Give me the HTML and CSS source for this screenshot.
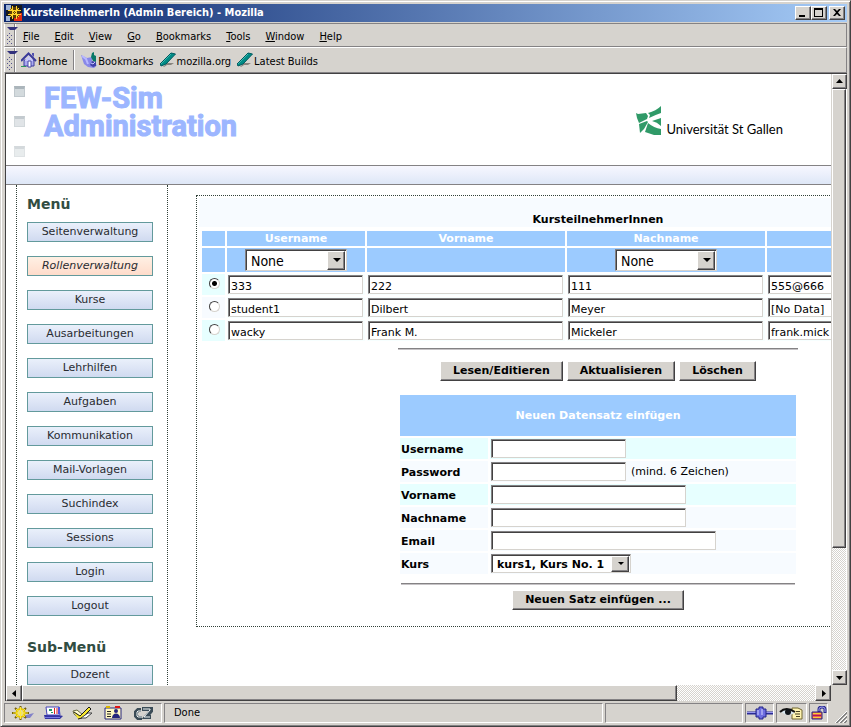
FILE: index.html
```html
<!DOCTYPE html>
<html lang="de">
<head>
<meta charset="utf-8">
<title>KursteilnehmerIn (Admin Bereich) - Mozilla</title>
<link rel="stylesheet" href="styles.css">
</head>
<body>
<div class="window">
  <header class="titlebar">
    <svg class="app-icon" viewBox="0 0 16 16"><rect width="16" height="16" fill="#18191c"/><path d="M0 0h5v5H0zM0 11h4v5H0z" fill="#9fb4d8"/><path d="M10 8h6v8H8v-3h2z" fill="#e02a12"/><path d="M4 5l2-3h5l3 3v4l-3 4H6L3 9z" fill="#5a3c08"/><path d="M6.500 1v13M10.500 1v13M2 5.500h13M2 9.500h13M4 3l9 9M13 3l-9 9" fill="none" stroke="#ffd42a"/></svg>
    <h1>KursteilnehmerIn (Admin Bereich) - Mozilla</h1>
    <div class="win-buttons">
      <button aria-label="Minimieren"><svg viewBox="0 0 12 10"><path d="M2 7h6v2H2z"/></svg></button>
      <button aria-label="Maximieren"><svg viewBox="0 0 12 10"><path fill-rule="evenodd" d="M1 0h9v9H1zM2 2h7v6H2z"/></svg></button>
      <button class="close" aria-label="Schließen"><svg viewBox="0 0 12 10"><path d="M2 1h2l2 2 2-2h2L7 4.500l3 3.500H8L6 6 4 8H2l3-3.500z"/></svg></button>
    </div>
  </header>

  <div class="toolbar menu-row">
    <span class="gripper"></span>
    <nav class="menus">
      <button><u>F</u>ile</button><button><u>E</u>dit</button><button><u>V</u>iew</button><button><u>G</u>o</button><button><u>B</u>ookmarks</button><button><u>T</u>ools</button><button><u>W</u>indow</button><button><u>H</u>elp</button>
    </nav>
  </div>
  <div class="toolbar links-row">
    <span class="gripper"></span>
    <nav class="links">
      <a href="#"><svg viewBox="0 0 16 16"><path d="M3 8h10v6H3z" fill="#a9a9f0" stroke="#3c3c9c"/><path d="M0 9L7.500 1.500 15 9" fill="none" stroke="#3a3a9a" stroke-width="2"/><path d="M4 8l4-4 4 4v1H4z" fill="#c9c9fa"/><path d="M7 9h3v6H7z" fill="#fff" stroke="#4848a8"/><path d="M11 1h2v4l-2-2z" fill="#5050b0"/><path d="M0 14.500h5" stroke="#2a9a5a"/></svg><span>Home</span></a>
      <span class="divider"></span>
      <a href="#"><svg viewBox="0 0 16 16"><path d="M0 3l6 3 5-1v6l5 2-3 3-6-1-4-3z" fill="#8888e8"/><path d="M1 4l4 3 2 5" fill="none" stroke="#b8b8ff" stroke-width="2"/><path d="M11 1l2-1v3l2 1v6l-3-1-2-4z" fill="#087868"/><path d="M11 9l4 1v4l-3 1-3-2z" fill="#4040a8"/><path d="M10 11l2 1 2-2" fill="none" stroke="#ccccff"/></svg><span>Bookmarks</span></a>
      <a href="#"><svg viewBox="0 0 16 16"><path d="M3 15l4-4h7l-3 2-4 0-3 2z" fill="#87837d"/><path d="M0 12L11 1l4.500 1L6 12l-5 2z" fill="#008b85" stroke="#005a5f"/><path d="M1 12L11 2" stroke="#40b8b0"/></svg><span>mozilla.org</span></a>
      <a href="#"><svg viewBox="0 0 16 16"><path d="M3 15l4-4h7l-3 2-4 0-3 2z" fill="#87837d"/><path d="M0 12L11 1l4.500 1L6 12l-5 2z" fill="#008b85" stroke="#005a5f"/><path d="M1 12L11 2" stroke="#40b8b0"/></svg><span>Latest Builds</span></a>
    </nav>
  </div>

  <div class="viewport">
    <div class="page">
      <header class="banner">
        <div class="marks"><i></i><i></i><i></i></div>
        <h2>FEW-Sim<br>Administration</h2>
        <div class="uni">
          <svg viewBox="0 0 26 29"><path d="M0 7l2 1 8-1 2 3-1 3-8 4-2-5zM12 7Q20 5 25 0v7Q19 9 13 12l1-3zM16 15l9-3v8q-4-4-9-5zM3 18l8-3 1 1-4 7-4 4zM12 17q6 5 13 6v6h-7L9 26z" fill="#309a68"/></svg>
          <span>Universität St Gallen</span>
        </div>
      </header>
      <div class="band"></div>
      <div class="columns">
        <nav class="sidebar">
          <h3>Menü</h3>
          <a href="#">Seitenverwaltung</a>
          <a href="#" class="active">Rollenverwaltung</a>
          <a href="#">Kurse</a>
          <a href="#">Ausarbeitungen</a>
          <a href="#">Lehrhilfen</a>
          <a href="#">Aufgaben</a>
          <a href="#">Kommunikation</a>
          <a href="#">Mail-Vorlagen</a>
          <a href="#">Suchindex</a>
          <a href="#">Sessions</a>
          <a href="#">Login</a>
          <a href="#">Logout</a>
          <h3>Sub-Menü</h3>
          <a href="#">Dozent</a>
        </nav>
        <main class="panel">
          <h4>KursteilnehmerInnen</h4>
          <table class="people">
            <colgroup><col class="c-pick"><col class="c-user"><col class="c-name"><col class="c-name"><col></colgroup>
            <thead>
              <tr><th></th><th>Username</th><th>Vorname</th><th>Nachname</th><th></th></tr>
              <tr class="filters"><td></td><td><span class="drop wide"><select aria-label="Filter Username"><option>None</option></select></span></td><td></td><td><span class="drop wide"><select aria-label="Filter Nachname"><option>None</option></select></span></td><td></td></tr>
            </thead>
            <tbody>
              <tr><td><input type="radio" name="p" aria-label="333" checked></td><td><input class="w-s" aria-label="Username" value="333"></td><td><input class="w-m" aria-label="Vorname" value="222"></td><td><input class="w-m" aria-label="Nachname" value="111"></td><td><input class="w-l" aria-label="Email" value="555@666"></td></tr>
              <tr><td><input type="radio" name="p" aria-label="student1"></td><td><input class="w-s" aria-label="Username" value="student1"></td><td><input class="w-m" aria-label="Vorname" value="Dilbert"></td><td><input class="w-m" aria-label="Nachname" value="Meyer"></td><td><input class="w-l" aria-label="Email" value="[No Data]"></td></tr>
              <tr><td><input type="radio" name="p" aria-label="wacky"></td><td><input class="w-s" aria-label="Username" value="wacky"></td><td><input class="w-m" aria-label="Vorname" value="Frank M."></td><td><input class="w-m" aria-label="Nachname" value="Mickeler"></td><td><input class="w-l" aria-label="Email" value="frank.mick"></td></tr>
            </tbody>
          </table>
          <hr>
          <div class="actions"><button>Lesen/Editieren</button><button>Aktualisieren</button><button>Löschen</button></div>
          <form class="new-entry">
            <h5>Neuen Datensatz einfügen</h5>
            <div class="row cyan"><label for="f1">Username</label><div><input id="f1" class="w-s"></div></div>
            <div class="row"><label for="f2">Password</label><div><input id="f2" type="password" class="w-s"><span>(mind. 6 Zeichen)</span></div></div>
            <div class="row cyan"><label for="f3">Vorname</label><div><input id="f3" class="w-m"></div></div>
            <div class="row"><label for="f4">Nachname</label><div><input id="f4" class="w-m"></div></div>
            <div class="row"><label for="f5">Email</label><div><input id="f5" class="w-l"></div></div>
            <div class="row"><label for="f6">Kurs</label><div><span class="drop course"><select id="f6"><option>kurs1, Kurs No. 1</option></select></span></div></div>
            <hr>
            <button type="button">Neuen Satz einfügen ...</button>
          </form>
        </main>
      </div>
    </div>
    <div class="scroll vertical">
      <button aria-label="Nach oben"><svg viewBox="0 0 7 7"><path d="M0 5h7L3.500 1z"/></svg></button>
      <span class="thumb"></span><span class="track"></span>
      <button aria-label="Nach unten"><svg viewBox="0 0 7 7"><path d="M0 2h7L3.500 6z"/></svg></button>
    </div>
    <div class="scroll horizontal">
      <button aria-label="Nach links"><svg viewBox="0 0 7 7"><path d="M5 0v7L1 3.500z"/></svg></button>
      <span class="thumb"></span><span class="track"></span>
      <button aria-label="Nach rechts"><svg viewBox="0 0 7 7"><path d="M2 0v7L6 3.500z"/></svg></button>
    </div>
    <div class="corner"></div>
  </div>

  <footer class="status">
    <div class="cell apps">
      <svg viewBox="0 0 22 14"><path d="M11 10l7-2 4-1-4 5h-6z" fill="#8282c8"/><path d="M0 7h17M8.500 0v14M3 2l11 10M14 2L3 12" stroke="#77620a" stroke-width="2"/><circle cx="8.500" cy="7" r="4" fill="#d6d3ce" stroke="#e9c800" stroke-width="2"/><path d="M1 7h15M8.500 1v12M4 3l9 8M13 3l-9 8" stroke="#ffeb3a"/></svg>
      <svg viewBox="0 0 22 14"><path d="M2 9h15l4 1-3 3H3z" fill="#3535a0"/><path d="M4 1h13l1 8H5z" fill="#fff" stroke="#4545b8"/><path d="M7 3h3v2H7zM9 6h2v1H9z" fill="#229b62"/><path d="M12.500 2v6M15 2v6" stroke="#d82323"/><path d="M17 1v7" stroke="#5050e0" stroke-width="2"/><path d="M3 11.500h15" stroke="#7878e5"/></svg>
      <svg viewBox="0 0 22 14"><path d="M1 5l4-1 6 5-4 3-5-4z" fill="#fffbd0" stroke="#686840"/><path d="M2 6l6 4 9-9 2 2-9 9-4 1" fill="#f7e72c" stroke="#181818"/><path d="M9 12l7-5 4 0-6 5z" fill="#fff" stroke="#444"/></svg>
      <svg viewBox="0 0 22 14"><path d="M3 2h16v11H3z" fill="#fff8c2" stroke="#26267c"/><path d="M5 5.500h4M5 8h4M5 10.500h4" stroke="#222"/><circle cx="14" cy="5" r="2" fill="#26267c"/><path d="M10 12c0-6 8-6 8 0z" fill="#26267c"/><path d="M4 1h4" stroke="#d9b400" stroke-width="2"/><path d="M13 1h5" stroke="#e01515" stroke-width="2"/></svg>
      <svg viewBox="0 0 22 14"><path d="M9 4H6L4 6v4l2 2h4M10 3h9v2l-5 6h5" fill="none" stroke="#3b4c57" stroke-width="4"/><path d="M9 5H6L5 6v4l1 1h4M11 3h7v1l-6 7h6" fill="none" stroke="#f3f7f7"/></svg>
    </div>
    <div class="cell message">Done</div>
    <div class="cell progress"></div>
    <div class="cell online"><svg viewBox="0 0 26 14"><path d="M0 7h26" stroke="#2b2b96" stroke-width="3"/><path d="M0 6.500h26" stroke="#9797ed"/><path d="M9 3h3V1h4v2h3v8h-3v2h-4v-2H9z" fill="#6d6de0" stroke="#242488"/><path d="M11 4v5M15 3v6" stroke="#d4d4ff"/></svg></div>
    <div class="cell privacy"><svg viewBox="0 0 26 14"><path d="M13 2h6l4 2v9H13z" fill="#fff4b0" stroke="#71662e"/><path d="M17 5.500h4M16 8h5M17 10.500h4" stroke="#443e20"/><path d="M1 6Q8 1 16 7Q8 11 4 7z" fill="#d8e6ee"/><path d="M1 6Q7 0 16 6" fill="none" stroke="#111" stroke-width="2"/><circle cx="9" cy="6" r="3" fill="#10151a"/></svg></div>
    <div class="cell security"><svg viewBox="0 0 16 14"><path d="M1 6h10v7H1z" fill="#ef5b52" stroke="#26267c"/><path d="M2 7.500h8M2 11.500h8" stroke="#f6cf32"/><path d="M2 9.500h8" stroke="#a11b5b"/><path d="M8 6V3q0-2 3-2t3 2v4" fill="none" stroke="#27278e" stroke-width="3"/><path d="M8 5V3q0-2 3-2t3 2v3" fill="none" stroke="#a6a6f1"/></svg></div>
    <svg class="grip" viewBox="0 0 13 13"><path d="M1 13L13 1M5 13l8-8M9 13l4-4" stroke="#fff"/><path d="M2 13L13 2M3 13L13 3M6 13l7-7M7 13l6-6M10 13l3-3M11 13l2-2" stroke="#858585"/></svg>
  </footer>
</div>
</body>
</html>
```
FILE: styles.css
```css
:root {
  --face: #d6d3ce;
  --shade: #848284;
  --dark: #424142;
  --blue: #9ccbff;
  --cyan: #e7ffff;
  --pale: #f7fbff;
  --ui: "DejaVu Sans Condensed", "Noto Sans", sans-serif;
  --text: "DejaVu Sans", sans-serif;
}
* { box-sizing: border-box; }
body { margin: 0; font: 11px/14px var(--ui); color: #000; }
h1, h2, h3, h4, h5 { margin: 0; }
button, input, select { font: inherit; color: inherit; margin: 0; }
svg { display: block; flex: none; }

.window {
  height: 100vh;
  display: flex;
  flex-direction: column;
  overflow: hidden;
  background: var(--face);
  border: 1px solid var(--face);
  border-right-color: var(--dark);
  border-bottom-color: var(--dark);
  box-shadow: inset 1px 1px #fff, inset -1px -1px var(--shade);
  padding: 3px;
}

.titlebar {
  height: 18px;
  margin-bottom: 1px;
  display: flex;
  align-items: center;
  gap: 1px;
  padding: 0 2px;
  background: linear-gradient(90deg, #08246b, #a5cbf7);
  color: #fff;
}
.titlebar h1 { flex: 1; font-size: 11px; line-height: 18px; white-space: nowrap; }
.app-icon { width: 16px; height: 16px; }
.win-buttons { display: flex; }
.win-buttons button, .scroll button {
  padding: 0;
  background: var(--face);
  border: 1px solid;
  border-color: #fff var(--dark) var(--dark) #fff;
  box-shadow: inset -1px -1px var(--shade);
}
.win-buttons button { width: 16px; height: 14px; }
.win-buttons .close { margin-left: 2px; }
.win-buttons svg { width: 12px; height: 10px; margin-left: 1px; }

.toolbar {
  display: flex;
  border: 1px solid var(--shade);
  border-top-color: #fff;
  border-left-color: #fff;
}
.menu-row { height: 24px; border-top-color: var(--shade); }
.links-row { height: 26px; }
.gripper {
  width: 10px;
  padding: 3px 2px 2px;
  display: flex;
  flex-direction: column;
  gap: 3px;
  border-right: 1px solid var(--shade);
  box-shadow: 1px 0 #fff;
}
.gripper::before { content: ""; width: 5px; border: solid transparent; border-width: 3px 3px 0; border-top-color: #31307b; }
.gripper::after {
  content: "";
  flex: 1;
  width: 5px;
  background:
    conic-gradient(at 1px 1px, transparent 75%, #52518c 0) 0 2px / 4px 4px,
    conic-gradient(at 1px 1px, transparent 75%, #52518c 0) 2px 0 / 4px 4px;
}
.menus, .links { display: flex; align-items: center; padding-top: 3px; }
.menus { gap: 15px; padding-left: 8px; }
.menus button { border: 0; background: none; padding: 0; }
.links { gap: 6px; padding-left: 6px; padding-top: 0; }
.links a { display: flex; align-items: center; gap: 1px; color: #000; text-decoration: none; }
.links a span { padding-top: 3px; }
.links svg { width: 16px; height: 16px; }
.divider { height: 20px; border-left: 1px solid var(--shade); border-right: 1px solid #fff; }

.viewport {
  flex: 1;
  min-height: 0;
  display: grid;
  grid-template: minmax(0, 1fr) 16px / minmax(0, 1fr) 16px;
  border-top: 1px solid var(--dark);
  border-left: 1px solid var(--dark);
  margin-left: 1px;
}
.page { overflow: hidden; background: #fff; display: flex; flex-direction: column; font-family: var(--text); }

.banner { flex: none; height: 92px; display: flex; padding: 0 48px 0 8px; border-bottom: 1px solid var(--shade); }
.marks { width: 30px; padding-top: 12px; display: grid; grid-auto-rows: 30px; }
.marks i { width: 11px; height: 11px; background: #d3dadd; border: 1px solid #c0c8cd; border-top: 3px solid #abb5bb; }
.marks i:nth-child(2) { opacity: .7; }
.marks i:nth-child(3) { opacity: .5; }
.banner h2 { padding-top: 10px; font: bold 29px/28px Roboto, sans-serif; color: #9cb6ff; -webkit-text-stroke: 1px #9cb6ff; }
.uni { margin: 32px 0 0 auto; display: flex; align-items: flex-start; gap: 4px; }
.uni svg { width: 26px; height: 29px; }
.uni span { font: 13px/16px Lato, sans-serif; padding-top: 15px; }
.band { flex: none; height: 19px; background: linear-gradient(#f7f7ff, #dee7f7); border-bottom: 1px solid var(--shade); }

.columns { flex: 1; min-height: 0; display: flex; align-items: flex-start; gap: 28px; padding-left: 10px; }
.sidebar {
  flex: none;
  width: 152px;
  padding: 11px 14px 20px 10px;
  display: flex;
  flex-direction: column;
  gap: 14px;
  border: dotted #314139;
  border-width: 0 1px;
}
.sidebar h3 { font-size: 14px; line-height: 16px; color: #314d42; margin-bottom: -4px; }
.sidebar a + h3 { margin-top: 9px; }
.sidebar a {
  height: 20px;
  border: 1px solid #639a9c;
  background: linear-gradient(#eaf0fb, #d0daf0);
  color: #292c31;
  font-size: 11px;
  line-height: 18px;
  text-align: center;
  text-decoration: none;
}
.sidebar .active { background: linear-gradient(#fff0e4, #ffdccb); font-style: italic; }

.panel {
  flex: none;
  width: 804px;
  margin-top: 10px;
  padding: 2px 2px 16px;
  border: 1px dotted #314139;
  display: flex;
  flex-direction: column;
  align-items: center;
  font-size: 11px;
}
.panel h4 { align-self: stretch; background: var(--pale); padding: 14px 0 0; font-size: 11px; line-height: 15px; text-align: center; margin-bottom: 2px; }
.people { width: 796px; table-layout: fixed; border-spacing: 2px; }
.people th, .people td { padding: 0; text-align: center; }
.people thead th, .people thead td { background: var(--blue); color: #fff; }
.people th { height: 15px; line-height: 15px; }
.people tbody td { height: 21px; padding-left: 1px; background: #f7ffff; text-align: left; line-height: 0; }
.people .filters td { height: 24px; line-height: 0; }
.people tbody td:first-child { background: var(--cyan); text-align: center; }
.people tbody tr:nth-child(2) td:first-child { background: var(--pale); }
.c-pick { width: 23px; }
.c-user { width: 138px; }
.c-name { width: 198px; }

.panel input:not([type="radio"]), .drop {
  height: 19px;
  border: 1px solid;
  border-color: var(--shade) var(--face) var(--face) var(--shade);
  box-shadow: inset 1px 1px var(--dark);
  background: #fff;
  border-radius: 0;
}
.panel input:not([type="radio"]) { padding: 3px 2px 0; line-height: 14px; vertical-align: top; }
.panel .w-s { width: 135px; }
.panel .w-m { width: 195px; }
.panel .w-l { width: 225px; }
input[type="radio"] {
  appearance: none;
  width: 11px;
  height: 11px;
  margin-bottom: 2px;
  border: 1px solid;
  border-color: var(--dark) var(--face) var(--face) var(--dark);
  border-radius: 50%;
  background: #fff;
}
input[type="radio"]:checked { background: radial-gradient(circle, #000 0 2px, #fff 3px); }

.drop { position: relative; display: inline-block; vertical-align: middle; padding: 1px; }
.drop select { appearance: none; display: block; width: 100%; height: 100%; border: 0; background: #fff; color: #000; padding: 1px 0 0 4px; outline: 0; }
.drop::before { content: ""; position: absolute; top: 1px; right: 1px; bottom: 0; width: 16px; background: var(--face); border: 1px solid; border-color: #fff var(--dark) var(--dark) #fff; box-shadow: inset -1px -1px var(--shade); pointer-events: none; }
.drop::after { content: ""; position: absolute; top: 7px; right: 6px; border: solid transparent; border-width: 3px 3px 0; border-top-color: #000; pointer-events: none; }
.wide { width: 102px; height: 22px; }
.wide::after { top: 8px; right: 5px; border-width: 4px 4px 0; }
.wide select { font: 14px/16px var(--ui); }
.course { width: 140px; }
.course select { font-weight: bold; line-height: 13px; }

.panel hr { width: 400px; height: 2px; margin: 5px 0 11px; border: 0; background: #c6c3c6; border-top: 1px solid var(--shade); }
.panel button {
  height: 20px;
  padding: 0 12px;
  background: var(--face);
  border: 1px solid;
  border-color: #fff var(--dark) var(--dark) #fff;
  box-shadow: inset -1px -1px var(--shade);
  font-weight: bold;
  line-height: 18px;
}
.actions { display: flex; gap: 4px; margin-bottom: 14px; }
.new-entry { width: 396px; display: flex; flex-direction: column; align-items: center; gap: 2px; }
.new-entry h5 { width: 100%; background: var(--blue); color: #fff; font-size: 11px; line-height: 41px; text-align: center; }
.row { width: 100%; display: grid; grid-template-columns: 88px 1fr; gap: 2px; }
.row > * { background: var(--pale); height: 21px; padding: 1px; }
.row.cyan > * { background: var(--cyan); }
.row label { font-weight: bold; line-height: 21px; }
.row div { display: flex; }
.row div > span:not(.drop) { padding-left: 5px; line-height: 20px; }
.panel .new-entry hr { width: 394px; margin: 7px 0 3px; }

.scroll { display: flex; }
.vertical { flex-direction: column; border-left: 1px solid var(--face); border-right: 1px solid #fff; }
.scroll button { flex: none; display: grid; place-items: center; width: 15px; height: 15px; }
.horizontal button { width: 16px; height: 16px; }
.scroll svg { width: 7px; height: 7px; }
.vertical, .horizontal { background: repeating-conic-gradient(#fff 0 25%, var(--face) 0 50%) 0 0 / 2px 2px; }
.thumb { background: var(--face); border: 1px solid; border-color: #fff var(--dark) var(--dark) #fff; box-shadow: inset -1px -1px var(--shade); }
.vertical .thumb { flex: 79; }
.vertical .track { flex: 21; }
.horizontal .thumb { flex: 165; }
.horizontal .track { flex: 35; }

.status { flex: none; height: 22px; padding-top: 2px; display: flex; gap: 2px; }
.cell { border: 1px solid; border-color: var(--shade) #fff #fff var(--shade); display: flex; align-items: center; justify-content: center; }
.cell svg { height: 14px; }
.apps { width: 158px; gap: 8px; }
.apps svg { width: 22px; }
.message { flex: 1; justify-content: flex-start; padding-left: 9px; }
.progress { width: 138px; }
.online { width: 29px; }
.privacy { width: 31px; }
.online svg, .privacy svg { width: 26px; }
.security { width: 19px; }
.security svg { width: 16px; }
.grip { width: 13px; height: 13px; align-self: flex-end; margin-left: 4px; }
```
